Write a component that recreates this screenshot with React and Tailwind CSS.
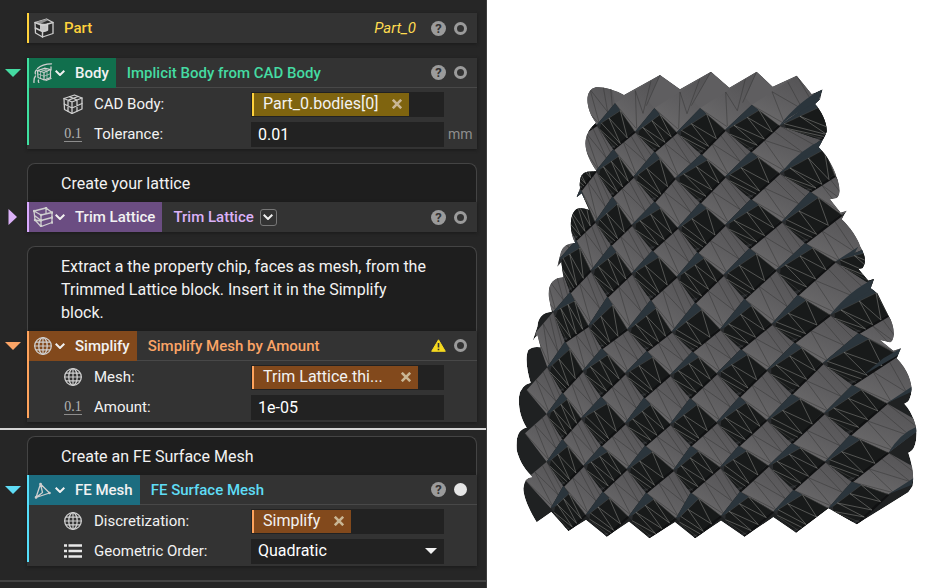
import { useState } from "react";

const themes = {
  yellow: { bar: "bg-[#ffd23c]", text: "text-[#ffd23c]", chip: "bg-[#7f640f] border-[#ffd23c]" },
  green: { bar: "bg-[#3fe0a0]", text: "text-[#45dba2]", tag: "bg-[#116f4d]" },
  purple: { bar: "bg-[#d9aaff]", text: "text-[#dbb1f8]", tag: "bg-[#6b4d82]" },
  orange: { bar: "bg-[#ffa35c]", text: "text-[#fba466]", tag: "bg-[#82491c]", chip: "bg-[#82491c] border-[#ffa35c]" },
  cyan: { bar: "bg-[#55defa]", text: "text-[#5fdcf5]", tag: "bg-[#1c6d80]" },
};

function Svg({ children }) {
  return (
    <svg
      viewBox="0 0 20 20"
      className="size-5 shrink-0"
      fill="none"
      stroke="#cfcfcf"
      strokeWidth="1.3"
      strokeLinejoin="round"
      strokeLinecap="round"
      aria-hidden="true"
    >
      {children}
    </svg>
  );
}

function PartIcon() {
  return (
    <Svg>
      <path d="M1 4.500 12.500 1 19 4.500 19 15.500 8.500 19 1.500 15z" fill="#2b2b2b" />
      <path d="M1 4.500 12.500 1 14 2.200 5.500 6.200z" fill="#8f8f8f" stroke="none" />
      <path d="M6 5.500 13.500 6v7L8.500 14.500 6 12z" fill="#c4c4c4" stroke="none" />
      <path d="M1 4.500 8.500 7.500 19 4.500M8.500 14V19M1.300 10 8.500 13.500 13.500 12V6" strokeWidth="1.500" />
    </Svg>
  );
}

function GridCubeIcon() {
  return (
    <Svg>
      <path d="M1 4.500 11.500 1 19 4v11L9 19.500 1.500 15.500z" />
      <path d="M1 4.500 9 8l10-4M9 8v11.500M6.500 2.700 14 6v11M15 2.500 5 6.300v11M1.200 10 9 14l10-4.500" />
    </Svg>
  );
}

function ImplicitIcon() {
  return (
    <Svg>
      <path d="M4.500 7.500 11.500 5.200 17.500 6.500v8L11.500 17 5 14.500zM4.500 7.500l6.500 2 6.500-3M11 9.500v7.500" strokeWidth="1.200" />
      <path d="M8 6.500l6 1.500v7.500M5 11l6 2.200 6.500-2.500M14 6 7.500 8.500v7" strokeWidth="0.700" />
      <path d="M4.500 5.500C8 2 13 .8 18.500 .8M3.500 7C2 8.500 2 10 2.500 11M1 19.500C.8 17 1.200 14.500 2.500 13M5.500 17c-.3 1 0 2 .3 2.500M18 4v3M13 17.500l5-2" />
    </Svg>
  );
}

function LatticeIcon() {
  return (
    <Svg>
      <path d="M1 4 13 1l6 4.500v10L8 19.500 2 13zM1 4l7 4 11-2.500M8 8v11.500M1.500 8.500 8 13.500l11-3M2 13l6 1M13 1v6" strokeWidth="1.300" />
      <path d="M1 4h.1M13 1h.1M19 5.500h.1M8 8h.1M8 13.500h.1M8 19h.1M19 15.500h.1M2 13h.1M19 10.500h.1" strokeWidth="2.400" />
    </Svg>
  );
}

function GlobeIcon() {
  return (
    <Svg>
      <circle cx="10" cy="10" r="8.300" />
      <ellipse cx="10" cy="10" rx="4.200" ry="8.300" />
      <path d="M10 1.700v16.600M3 6.200h14M3 13.800h14M1.700 10h16.600" strokeWidth="1.200" />
    </Svg>
  );
}

function MeshIcon() {
  return (
    <Svg>
      <path d="M7.500 4 3 17.500 16.500 13zM7.500 4l2 8.500L3 17.500" />
      <path d="M7.500 4h.1M3 17.400h.1M16.400 13h.1" strokeWidth="2.600" />
    </Svg>
  );
}

function ListIcon() {
  return (
    <Svg>
      <path d="M1 4.500h3M5.500 4.500h13.500M1 10h3M5.500 10h13.500M1 15.500h3M5.500 15.500h13.500" stroke="#e8e8e8" strokeWidth="2.600" strokeLinecap="butt" />
    </Svg>
  );
}

function NumberIcon() {
  return (
    <span aria-hidden="true" className="mx-px border-b border-[#8d8d8d] text-center font-['Liberation_Serif',serif] text-[14px] leading-[14px] text-[#b4b4b4]">
      0.1
    </span>
  );
}

function Chevron() {
  return (
    <svg viewBox="0 0 10 6" className="h-[6px] w-[10px] shrink-0" fill="none" stroke="#f0f0f0" strokeWidth="2" aria-hidden="true">
      <path d="M.7 .7 5 5 9.300 .7" />
    </svg>
  );
}

function HelpButton() {
  return (
    <button type="button" aria-label="Help" className="flex size-[15px] items-center justify-center rounded-full bg-[#9b9b9b] text-[13px] leading-none font-bold text-[#333]">
      ?
    </button>
  );
}

function WarningIcon() {
  return (
    <svg viewBox="0 0 15 13" className="h-[13px] w-[15px]" role="img" aria-label="Warning">
      <path d="M7.500 .8 14.300 12.300H.7z" fill="#f5d91f" stroke="#f5d91f" strokeLinejoin="round" />
      <path d="M7.500 4v4.500M7.500 9.700v1.600" stroke="#333" strokeWidth="1.600" />
    </svg>
  );
}

function Status({ warning, filled }) {
  return (
    <div className="ml-auto flex items-center gap-2 pr-[10px]">
      {warning ? <WarningIcon /> : <HelpButton />}
      <button
        type="button"
        aria-label="Toggle preview"
        className={`size-[13px] rounded-full ${filled ? "bg-[#e6e6e6]" : "border-3 border-[#9b9b9b]"}`}
      />
    </div>
  );
}

function Chip({ theme, clipped, children }) {
  return (
    <span className={`ml-px flex h-[23px] items-center gap-[14px] border-l-2 pr-[7px] pl-[9px] text-[16px] ${themes[theme].chip}`}>
      <span className={clipped ? "w-[124px]" : ""}>{children}</span>
      <button type="button" aria-label={`Remove ${children}`}>
        <svg viewBox="0 0 10 10" className="size-[10px]" stroke="#c9b694" strokeWidth="2.600" aria-hidden="true">
          <path d="M.8.8 9.200 9.200M9.200.8.8 9.200" />
        </svg>
      </button>
    </span>
  );
}

function Row({ icon, label, unit, htmlFor, children }) {
  return (
    <div className="flex h-[30px] items-center pl-[34px]">
      <div className="mr-[11px] flex w-5 flex-col">{icon}</div>
      <label htmlFor={htmlFor} className="w-[157px] shrink-0">{label}</label>
      <div className="relative flex h-[25px] min-w-0 flex-1 items-center bg-[#222]">{children}</div>
      <span className="w-[33px] shrink-0 pl-1 text-[14px] text-[#8e8e8e]">{unit}</span>
    </div>
  );
}

function TextField({ id, initial }) {
  const [value, setValue] = useState(initial);
  return (
    <input
      id={id}
      value={value}
      onChange={(e) => setValue(e.target.value)}
      className="h-full w-full bg-transparent pl-[7px] text-[16px] text-white outline-none"
    />
  );
}

function Note({ children }) {
  return (
    <div className="mr-[9px] ml-[27px] rounded-t-lg border border-b-0 border-[#444] bg-[#1e1e1e] pt-[8px] pr-[46px] pb-[7px] pl-[33px] text-[16px] leading-[23px]">
      {children}
    </div>
  );
}

function Block({ theme, icon, tag, title, menu, collapsed, warning, filled, children }) {
  const t = themes[theme];
  return (
    <div className="flex items-start pr-[9px]">
      <button type="button" aria-label={`Expand ${title}`} className={`flex h-[30px] w-[27px] shrink-0 items-center pl-[5px] ${t.text}`}>
        <svg viewBox="0 0 16 16" className="size-4" fill="currentColor" aria-hidden="true">
          <path d={collapsed ? "M3.500 0 12 8 3.500 16z" : "M0 4h16L8 12z"} />
        </svg>
      </button>
      <section className="flex min-w-0 flex-1 bg-[#333] shadow-[0_1px_3px_#1a1a1a]">
        <div className={`w-[2px] shrink-0 ${children ? "mb-1" : ""} ${t.bar}`} />
        <div className="min-w-0 flex-1">
          <header className={`flex h-[30px] items-center font-medium ${children ? "border-b border-[#484848]" : ""}`}>
            <button type="button" className={`flex h-[30px] items-center pr-[7px] pl-[4px] ${t.tag}`}>
              {icon}
              <span className="mr-[10px] ml-[2px]"><Chevron /></span>
              {tag}
            </button>
            <h2 className={`ml-[11px] ${t.text}`}>{title}</h2>
            {menu && (
              <button type="button" aria-label="Overloads" className="ml-[6px] flex size-[17px] items-center justify-center rounded-[3px] border border-[#777]">
                <Chevron />
              </button>
            )}
            <Status warning={warning} filled={filled} />
          </header>
          {children && <div className="pt-px">{children}</div>}
        </div>
      </section>
    </div>
  );
}

// Lattice nodes. Light faces span A[r][k] -> A[r][k+1], with B[r] above and B[r+1] below.
const A = [
  [[120, 110], [220, 110], [345, 130], [463, 145], [600, 145], [755, 135], [955, 115], [1100, 90]],
  [[140, 240], [230, 235], [340, 268], [463, 275], [603, 283], [752, 275], [962, 240], [1100, 260]],
  [[140, 380], [243, 390], [337, 410], [463, 425], [600, 428], [752, 418], [930, 395], [1080, 430]],
  [[120, 530], [228, 540], [333, 555], [457, 572], [592, 577], [748, 565], [915, 550], [1110, 560]],
  [[110, 690], [210, 697], [322, 710], [452, 720], [585, 728], [733, 717], [893, 705], [1115, 675]],
  [[105, 820], [195, 845], [305, 865], [440, 873], [577, 875], [722, 868], [883, 848], [1075, 820], [1230, 860]],
  [[80, 990], [187, 998], [303, 1010], [432, 1013], [570, 1015], [718, 1010], [875, 1002], [1057, 975], [1260, 975]],
  [[75, 1120], [187, 1138], [303, 1157], [435, 1157], [572, 1157], [716, 1157], [875, 1150], [1050, 1125], [1275, 1095]],
  [[75, 1260], [190, 1278], [308, 1295], [438, 1298], [572, 1298], [720, 1295], [880, 1290], [1055, 1265], [1275, 1240]],
  [[110, 1387], [205, 1413], [320, 1430], [448, 1435], [585, 1435], [733, 1430], [888, 1418], [1070, 1393], [1250, 1360]],
];
const B = [
  [[160, 60], [330, 60], [480, 45], [633, 35], [770, 35], [890, 47], [1060, 0]],
  [[180, 190], [290, 195], [405, 215], [530, 217], [675, 210], [838, 197], [1020, 190]],
  [[180, 310], [288, 332], [400, 350], [525, 355], [675, 350], [838, 340], [1005, 348]],
  [[180, 450], [285, 485], [395, 495], [533, 503], [675, 495], [845, 485], [1025, 465]],
  [[175, 600], [272, 632], [395, 640], [530, 650], [670, 645], [828, 630], [1005, 605], [1180, 600]],
  [[160, 755], [265, 797], [382, 808], [515, 815], [660, 808], [815, 792], [990, 765], [1165, 767]],
  [[142, 922], [248, 932], [375, 940], [510, 945], [650, 940], [800, 930], [968, 910], [1195, 885]],
  [[140, 1062], [243, 1075], [375, 1090], [510, 1092], [650, 1087], [800, 1080], [972, 1060], [1160, 1030]],
  [[140, 1205], [250, 1217], [380, 1227], [520, 1230], [660, 1222], [805, 1217], [975, 1205], [1165, 1178]],
  [[152, 1345], [257, 1365], [385, 1370], [528, 1375], [663, 1368], [820, 1355], [985, 1345], [1165, 1303]],
];

const OUTLINE =
  "M258 235Q262 212 288 188C258 150 250 90 288 82Q325 80 372 105L480 45 540 88 633 35 688 83 770 35 818 80 890 47 935 103 968 88 960 118 945 132C965 155 982 190 980 215Q972 235 956 262C985 290 1003 330 1008 345Q1028 400 1010 414L990 418 1022 458 1040 452 1025 478C1050 500 1075 540 1080 558Q1105 600 1088 624L1075 627 1105 662 1122 657 1112 685 1133 700 1165 765C1186 800 1186 840 1170 847L1140 840 1180 872 1203 865 1190 895C1225 930 1235 970 1235 990Q1232 1027 1213 1031C1240 1060 1250 1100 1250 1120Q1248 1172 1225 1178C1238 1215 1242 1250 1238 1278L1225 1297 1070 1393 985 1345 888 1418 820 1372 733 1430 663 1382 585 1435 525 1387 448 1435 387 1385 320 1430 258 1380 205 1413 154 1356 110 1387C85 1345 70 1310 70 1285Q72 1252 98 1252C65 1220 55 1190 50 1170Q45 1108 80 1103C60 1070 55 1040 57 1010Q62 975 92 968C80 930 75 890 85 870Q98 858 122 862L112 825 98 842 112 800Q115 758 155 755L147 715Q140 655 190 652L184 605 172 620 183 575Q192 550 226 549C210 525 205 465 230 447Q245 442 268 450L245 400 230 412 240 385Q235 340 262 335L290 334C268 300 250 265 258 235Z";

const mix = (p, q, t) => [Math.round(p[0] + (q[0] - p[0]) * t), Math.round(p[1] + (q[1] - p[1]) * t)];
const poly = (...pts) => "M" + pts.map((p) => p.join(" ")).join("L") + "Z";
const line = (p, q) => `M${p.join(" ")}L${q.join(" ")}`;

function LightFace({ left, top, right, bottom, edge }) {
  // the topmost cells overlap their right-hand neighbour
  const corner = edge ? [right[0] - 18, right[1] - 22] : right;
  const wires = [
    [mix(left, top, 0.45), mix(bottom, corner, 0.12)],
    [mix(left, top, 0.45), mix(bottom, corner, 0.6)],
    [mix(left, top, 0.8), mix(bottom, corner, 0.6)],
    [left, mix(bottom, corner, 0.1)],
    [top, mix(bottom, corner, 0.85)],
  ];
  return (
    <g>
      <path d={poly(left, top, corner, right, bottom)} fill="url(#light)" />
      <path d={wires.map(([p, q]) => line(p, q)).join("")} stroke="#353435" strokeWidth="2" opacity="0.75" />
    </g>
  );
}

function DarkFace({ left, top, right, bottom, flip }) {
  const p2 = mix(top, right, 0.26);
  const p1 = [left[0] + 14, left[1] - 6];
  const p3 = mix(left, bottom, 0.18);
  const low = mix(bottom, right, 0.2);
  const t = (n) => mix(p1, p2, n);
  const e = (n) => mix(low, right, n);
  const wires = flip
    ? [[p1, e(0.15)], [t(0.4), e(0.15)], [t(0.4), e(0.55)], [p2, e(0.55)], [p3, low]]
    : [[p3, e(0.05)], [t(0.15), e(0.05)], [t(0.15), e(0.35)], [t(0.6), e(0.35)], [p2, e(0.7)], [t(0.6), e(0.7)]];
  return (
    <g>
      <path d={poly(left, top, right, bottom)} fill="#2a2c2e" />
      <path d={poly(left, top, p2, p1)} fill="#2b353c" />
      <path d={poly(p3, p1, p2, mix(right, p2, 0.06), low, mix(bottom, left, 0.15))} fill="#181a1a" />
      <path d={line(bottom, right)} stroke="#101112" strokeWidth="7" />
      <path d={line(p1, p2) + line(mix(left, bottom, 0.3), mix(low, bottom, 0.6)) + line(p2, right)} stroke="#5a5a59" strokeWidth="2" opacity="0.6" />
      <path d={wires.map(([p, q]) => line(p, q)).join("")} stroke="#858581" strokeWidth="2.400" opacity="0.7" />
    </g>
  );
}

function LatticeModel() {
  const lights = [];
  const darks = [];
  for (let r = 0; r < A.length; r++) {
    for (let k = 0; k < A[r].length; k++) {
      const key = `${r}-${k}`;
      if (r < B.length && A[r][k + 1] && B[r][k] && B[r + 1]?.[k]) {
        lights.push(<LightFace key={key} left={A[r][k]} top={B[r][k]} right={A[r][k + 1]} bottom={B[r + 1][k]} edge={r === 0 && k > 1 && k < 5} />);
      }
      if (k > 0 && A[r + 1]?.[k] && B[r + 1][k] && B[r + 1][k - 1]) {
        darks.push(
          <DarkFace key={key} top={A[r][k]} right={B[r + 1][k]} bottom={A[r + 1][k]} left={B[r + 1][k - 1]} flip={(r + k) % 2 === 0} />
        );
      }
    }
  }
  return (
    <svg viewBox="-39 -180 1380 1764" className="h-full w-full" fill="none" role="img" aria-label="Trimmed lattice mesh">
      <defs>
        <clipPath id="body">
          <path d={OUTLINE} />
        </clipPath>
        <linearGradient id="light" x1="0.200" y1="0.900" x2="0.700" y2="0.100">
          <stop offset="0" stopColor="#6a696a" />
          <stop offset="0.500" stopColor="#5f5e60" />
          <stop offset="1" stopColor="#565557" />
        </linearGradient>
      </defs>
      <g clipPath="url(#body)">
        <path d={OUTLINE} fill="#1f2122" />
        <path d="M250 20H940V130L838 197 755 135 675 210 600 145 530 217 463 145 405 215 345 130 290 195 250 190z" fill="#5f5e60" />
        {lights}
        {darks}
        <path d="M838 197Q900 120 968 88L955 122 870 172zM850 330Q900 270 970 238L945 270zM1005 605 1075 560 1060 585zM990 765Q1050 690 1122 657L1105 695 1010 750zM1195 885 1203 865 1150 895 1090 945zM1160 1030 1235 980 1235 995zM1165 1178Q1200 1120 1250 1100V1115zM1165 1303 1240 1255 1235 1275z" fill="#2b353c" />
      </g>
    </svg>
  );
}

export default function App() {
  return (
    <main className="grid min-h-screen grid-cols-[487fr_460fr] bg-white font-['Roboto',sans-serif] text-[15px] leading-[22px] text-[#f2f2f2]">
      <div className="border-r border-[#3e3e3e] bg-[#262626] pt-[13px]">
        <div className="mr-[9px] mb-[15px] ml-[27px] flex h-[30px] items-center border-l-2 border-[#ffd23c] bg-[#333] pl-[5px] shadow-[0_1px_3px_#1a1a1a]">
          <PartIcon />
          <h1 className="ml-[10px] font-medium text-[#ffd23c]">Part</h1>
          <span className="mr-[15px] ml-auto text-[#ffdc50] italic">Part_0</span>
          <div><Status /></div>
        </div>

        <Block theme="green" icon={<ImplicitIcon />} tag="Body" title="Implicit Body from CAD Body">
          <Row icon={<GridCubeIcon />} label="CAD Body:">
            <Chip theme="yellow">Part_0.bodies[0]</Chip>
          </Row>
          <Row icon={<NumberIcon />} label="Tolerance:" unit="mm" htmlFor="tolerance">
            <TextField id="tolerance" initial="0.01" />
          </Row>
        </Block>

        <div className="h-[14px]" />
        <Note>Create your lattice</Note>
        <Block theme="purple" icon={<LatticeIcon />} tag="Trim Lattice" title="Trim Lattice" menu collapsed />

        <div className="h-[14px]" />
        <Note>Extract a the property chip, faces as mesh, from the Trimmed Lattice block. Insert it in the Simplify block.</Note>
        <Block theme="orange" icon={<GlobeIcon />} tag="Simplify" title="Simplify Mesh by Amount" warning>
          <Row icon={<GlobeIcon />} label="Mesh:">
            <Chip theme="orange" clipped>Trim Lattice.thi...</Chip>
          </Row>
          <Row icon={<NumberIcon />} label="Amount:" htmlFor="amount">
            <TextField id="amount" initial="1e-05" />
          </Row>
        </Block>

        <hr className="my-[6px] border-t-2 border-[#d4d4d4]" />

        <Note>Create an FE Surface Mesh</Note>
        <Block theme="cyan" icon={<MeshIcon />} tag="FE Mesh" title="FE Surface Mesh" filled>
          <Row icon={<GlobeIcon />} label="Discretization:">
            <Chip theme="orange">Simplify</Chip>
          </Row>
          <Row icon={<ListIcon />} label="Geometric Order:" htmlFor="order">
            <select id="order" className="h-full w-full appearance-none bg-transparent pl-[7px] text-[16px] text-white outline-none">
              <option>Quadratic</option>
              <option>Linear</option>
            </select>
            <svg viewBox="0 0 12 6" className="pointer-events-none absolute right-[7px] h-[6px] w-[12px]" fill="#f2f2f2" aria-hidden="true">
              <path d="M0 0h12L6 6z" />
            </svg>
          </Row>
        </Block>

        <hr className="mt-[14px] border-t-2 border-[#444]" />
      </div>

      <div className="bg-white">
        <LatticeModel />
      </div>
    </main>
  );
}
